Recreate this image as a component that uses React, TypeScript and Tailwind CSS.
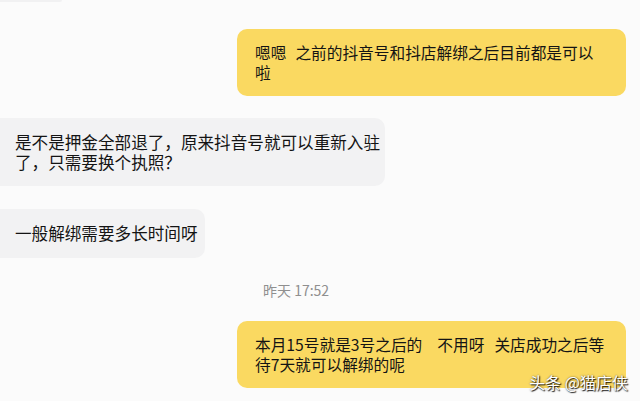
import React from "react";

const font = { fontFamily: '"Noto Sans CJK SC", "Noto Sans", sans-serif' };

export default function App() {
  return (
    <div
      className="relative w-[640px] h-[401px] overflow-hidden bg-[#fbfbfb] text-[#141414] flex flex-col"
      style={font}
    >
      <div className="h-[2px] w-[62px] bg-[#f1f1f2] rounded-br-[6px]" />

      <div className="self-end mr-[14px] mt-[27px] w-[389px] rounded-[10px] bg-[#fad961] pl-[18px] pr-[10px] pt-[14px] pb-[13px] text-[15.7px] leading-[20px] whitespace-nowrap">
        嗯嗯<span className="inline-block w-[9px]" />之前的抖音号和抖店解绑之后目前都是可以
        <br />
        啦
      </div>

      <div className="mt-[22px] w-[385px] rounded-r-[10px] bg-[#f2f2f3] pl-[15px] pr-[10px] pt-[14px] pb-[14px] text-[16.6px] leading-[20px] whitespace-nowrap">
        是不是押金全部退了，原来抖音号就可以重新入驻
        <br />
        了，只需要换个执照？
      </div>

      <div className="mt-[23px] w-[205px] rounded-r-[10px] bg-[#f2f2f3] pl-[15px] py-[14px] text-[16.6px] leading-[21px] whitespace-nowrap">
        一般解绑需要多长时间呀
      </div>

      <div className="mt-[23px] ml-[263px] text-[14px] leading-[18px] text-[#8f8f8f] whitespace-nowrap">
        昨天 17:52
      </div>

      <div className="self-end mr-[14px] mt-[22px] w-[389px] rounded-[10px] bg-[#fad961] pl-[18px] pr-[10px] pt-[14px] pb-[13px] text-[15.7px] leading-[20px] whitespace-nowrap">
        本月15号就是3号之后的<span className="inline-block w-[15px]" />不用呀<span className="inline-block w-[10px]" />关店成功之后等
        <br />
        待7天就可以解绑的呢
      </div>

      <div
        className="absolute right-[12px] bottom-[9px] text-[16px] leading-[20px] text-white whitespace-nowrap"
        style={{ textShadow: "1px 1px 1px rgba(0,0,0,0.85), 0 0 2px rgba(0,0,0,0.6)" }}
      >
        头条 @猫店侠
      </div>
    </div>
  );
}
